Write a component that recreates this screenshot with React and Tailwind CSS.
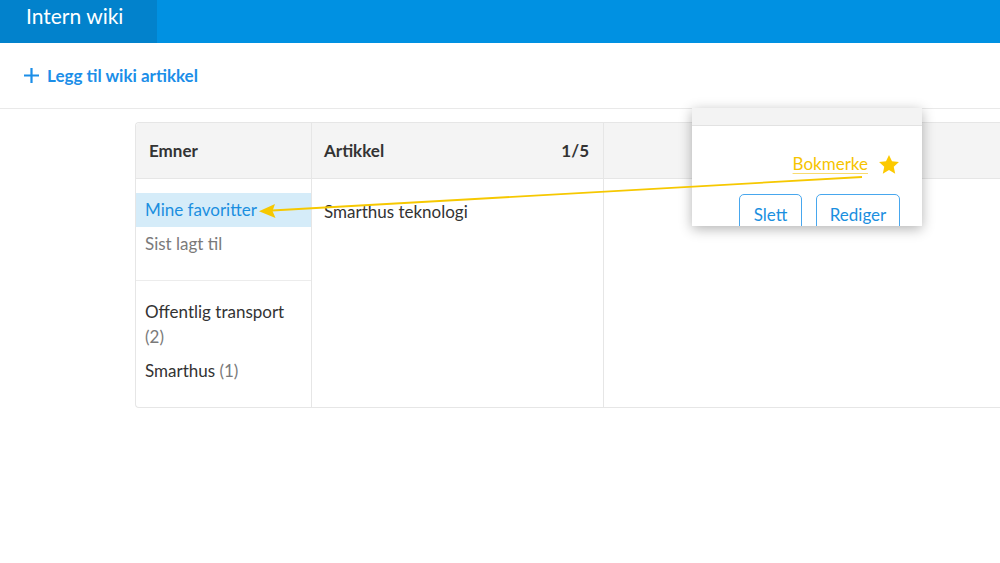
import React from 'react';

const topics = [
  { name: 'Offentlig transport', count: 2 },
  { name: 'Smarthus', count: 1 },
];

const App = () => {
  return (
    <div className="relative w-[1000px] h-[563px] overflow-hidden bg-white font-['Lato','Liberation_Sans',sans-serif] text-[#333]">
      {/* top bar */}
      <div className="flex h-[43px] bg-[#0091e2]">
        <div className="flex w-[157px] items-start bg-[#0282cc] pl-[26px] pt-0 text-[21px] text-white">
          Intern wiki
        </div>
      </div>

      {/* toolbar */}
      <div className="flex h-[66px] items-center border-b border-[#e9e9e9] pl-[23px]">
        <button className="flex items-center gap-[7px] text-[17px] font-bold text-[#1b8ee8]">
          <svg width="17" height="17" viewBox="0 0 17 17">
            <path d="M8.5 1v15M1 8.5h15" stroke="#1b8ee8" strokeWidth="2.2" />
          </svg>
          Legg til wiki artikkel
        </button>
      </div>

      {/* wiki table */}
      <div className="pl-[135px] pt-[13px]">
        <div className="flex h-[286px] rounded-l-[4px] border border-r-0 border-[#e6e6e6]">
          <div className="flex w-[176px] flex-col border-r border-[#e6e6e6]">
            <div className="flex h-[56px] items-center rounded-tl-[4px] border-b border-[#e6e6e6] bg-[#f4f4f4] pl-[13px] text-[17px] font-bold">
              Emner
            </div>
            <div className="flex flex-col border-b border-[#ececec] pb-[20px] pt-[14px]">
              <div className="flex h-[34px] items-center bg-[#d5ecf9] pl-[9px] text-[17px] text-[#1b8fe0]">
                Mine favoritter
              </div>
              <div className="flex h-[33px] items-center pl-[9px] text-[17px] text-[#7a7a7a]">
                Sist lagt til
              </div>
            </div>
            <div className="flex flex-col gap-[9px] pl-[9px] pr-[20px] pt-[18px] text-[17px] leading-[25px]">
              {topics.map((t) => (
                <div key={t.name}>
                  {t.name} <span className="text-[#7a7a7a]">({t.count})</span>
                </div>
              ))}
            </div>
          </div>

          <div className="flex w-[292px] flex-col border-r border-[#e6e6e6]">
            <div className="flex h-[56px] items-center justify-between border-b border-[#e6e6e6] bg-[#f4f4f4] pl-[12px] pr-[14px] text-[17px] font-bold">
              <span>Artikkel</span>
              <span>1/5</span>
            </div>
            <div className="pl-[12px] pt-[20px] text-[17px]">Smarthus teknologi</div>
          </div>

          <div className="flex flex-1 flex-col">
            <div className="h-[56px] border-b border-[#e6e6e6] bg-[#f4f4f4]" />
          </div>
        </div>
      </div>

      {/* bookmark popup */}
      <div className="absolute left-[692px] top-[108px] h-[118px] w-[230px] overflow-hidden bg-white shadow-[0_3px_12px_rgba(0,0,0,0.3)]">
        <div className="h-[18px] border-b border-[#e2e2e2] bg-[#f3f3f3]" />
        <div className="flex h-[22px] items-center justify-end gap-[10px] pr-[22px] mt-[27px]">
          <span className="text-[17px] text-[#f6c400] underline decoration-[#f9dc70] underline-offset-[3px]">Bokmerke</span>
          <svg width="22" height="21" viewBox="0 0 24 23">
            <path d="M12 1l3.3 7 7.6.8-5.7 5.2 1.6 7.5L12 17.6l-6.8 3.9 1.6-7.5L1.1 8.8l7.6-.8z" fill="#fcc900" />
          </svg>
        </div>
        <div className="flex justify-end gap-[14px] pr-[22px] pt-[19px]">
          <button className="flex h-[42px] w-[63px] shrink-0 items-start justify-center rounded-[5px] border border-[#48a7ee] pt-[7px] text-[17px] text-[#1b8fe0]">Slett</button>
          <button className="flex h-[42px] w-[84px] shrink-0 items-start justify-center rounded-[5px] border border-[#48a7ee] pt-[7px] text-[17px] text-[#1b8fe0]">Rediger</button>
        </div>
      </div>

      {/* annotation arrow */}
      <svg className="pointer-events-none absolute left-0 top-0" width="1000" height="563">
        <line x1="862" y1="177" x2="272" y2="210.5" stroke="#f6c800" strokeWidth="1.8" />
        <path d="M259 211.3l16-7.2-2.5 7 3 7z" fill="#f6c800" />
      </svg>
    </div>
  );
};

export default App;
